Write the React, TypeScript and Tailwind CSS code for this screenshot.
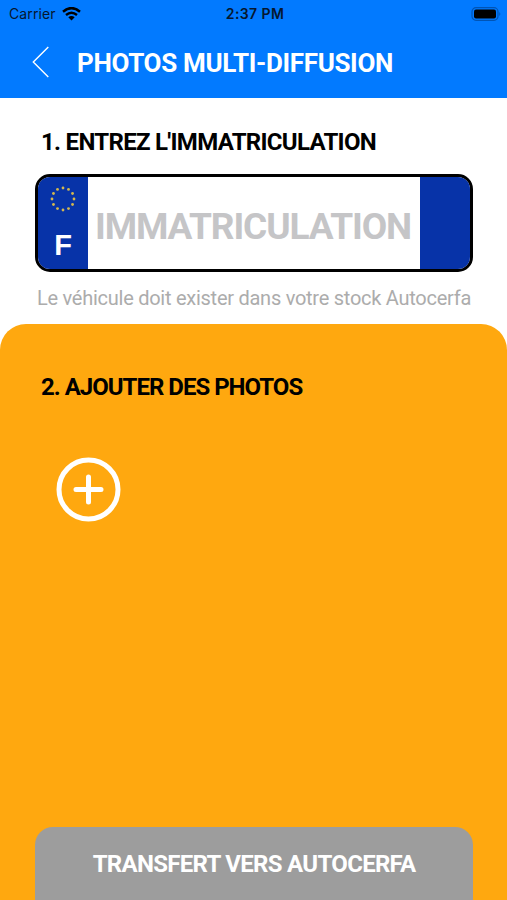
import { useState } from 'react'

const STARS = Array.from({ length: 12 }, (_, i) => {
  const angle = (i * Math.PI) / 6
  return { x: 13 + 11 * Math.sin(angle), y: 13 - 11 * Math.cos(angle) }
})

function StatusBar() {
  return (
    <div className="grid h-[27px] grid-cols-3 items-center pl-[9px] pr-[6px] font-['Inter',sans-serif] text-[14px] leading-none text-[#06172f]">
      <div className="flex items-center gap-[6px]">
        <span className="tracking-[0.1px]">Carrier</span>
        <svg width="19" height="14" viewBox="0 0 19 14" className="text-black">
          <path d="M1 4.7Q9.5 -2.5 18 4.7" fill="none" stroke="currentColor" strokeWidth="2.5" />
          <path d="M4 8Q9.5 3.3 15 8" fill="none" stroke="currentColor" strokeWidth="2.4" />
          <path d="M6.3 10.3Q9.5 7.7 12.7 10.3L9.5 13.6Z" fill="currentColor" />
        </svg>
      </div>
      <span className="text-center font-semibold tracking-[0.4px]">2:37 PM</span>
      <svg width="30" height="14" viewBox="0 0 30 14" className="justify-self-end">
        <rect x="1" y="0.7" width="26" height="12.6" rx="4" fill="none" stroke="#0054b5" strokeWidth="1.2" />
        <rect x="3" y="2.5" width="22" height="9" rx="2" fill="#000" />
        <path d="M28.3 5Q30.3 7 28.3 9Z" fill="#0054b5" />
      </svg>
    </div>
  )
}

export default function App() {
  const [plate, setPlate] = useState('')

  return (
    <div className="flex h-[900px] w-[507px] flex-col overflow-hidden bg-white font-['Roboto',sans-serif]">
      {/* Header */}
      <header className="h-[98px] shrink-0 bg-[#027aff]">
        <StatusBar />
        <div className="flex h-[70px] items-center pl-[32px]">
          <button type="button" aria-label="Retour" className="mr-[28px]">
            <svg width="17" height="32" viewBox="0 0 17 32" fill="none" stroke="#fff" strokeWidth="1.4">
              <path d="M16.3 1L1.3 16L16.3 31" />
            </svg>
          </button>
          <h1 className="whitespace-nowrap pt-[2px] text-[26px] font-bold leading-none tracking-[-0.34px] text-white">
            PHOTOS MULTI-DIFFUSION
          </h1>
        </div>
      </header>

      {/* Plate number */}
      <section className="h-[226px] shrink-0 px-[35px] pt-[31px]">
        <h2 className="whitespace-nowrap pl-[6px] text-[24px] font-bold leading-[26px] tracking-[-0.7px] text-black">
          1. ENTREZ L'IMMATRICULATION
        </h2>
        <div className="mt-[19px] flex h-[98px] w-[438px] overflow-hidden rounded-[15px] border-[3.5px] border-black bg-white">
          <div className="flex w-[50px] shrink-0 flex-col items-center bg-[#0733a8] pt-[9px]">
            <svg width="26" height="26" viewBox="0 0 26 26">
              {STARS.map((star, i) => (
                <circle key={i} cx={star.x} cy={star.y} r="1.4" fill="#d2b74f" />
              ))}
            </svg>
            <span className="mt-[18px] font-['Liberation_Sans',sans-serif] text-[29px] font-bold leading-[30px] text-white">
              F
            </span>
          </div>
          <input
            value={plate}
            onChange={(e) => setPlate(e.target.value)}
            placeholder="IMMATRICULATION"
            className="min-w-0 flex-1 pl-[7px] pt-[8px] text-[37px] font-bold tracking-[-1.13px] text-black outline-none placeholder:text-[#c5c5c7]"
          />
          <div className="w-[50px] shrink-0 bg-[#0733a8]" />
        </div>
        <p className="mt-[13px] whitespace-nowrap pl-[2px] text-[20px] leading-[26px] tracking-[-0.26px] text-[#acacac]">
          Le véhicule doit exister dans votre stock Autocerfa
        </p>
      </section>

      {/* Photos */}
      <section className="flex flex-1 flex-col rounded-t-[26px] bg-[#ffa80f] px-[35px] pt-[50px]">
        <h2 className="whitespace-nowrap pl-[6px] text-[24px] font-bold leading-[26px] tracking-[-1px] text-black">
          2. AJOUTER DES PHOTOS
        </h2>
        <button type="button" aria-label="Ajouter une photo" className="ml-[21px] mt-[57px] w-[65px]">
          <svg width="65" height="65" viewBox="0 0 65 65" fill="none" stroke="#fff" strokeWidth="5" strokeLinecap="round">
            <circle cx="32.5" cy="32.5" r="29.5" />
            <path d="M32.5 20V45M20 32.5H45" />
          </svg>
        </button>
        <button
          type="button"
          className="mt-auto h-[73px] w-[438px] whitespace-nowrap rounded-t-[18px] bg-[#9d9d9d] text-[24px] font-bold leading-none tracking-[-0.7px] text-white"
        >
          TRANSFERT VERS AUTOCERFA
        </button>
      </section>
    </div>
  )
}
